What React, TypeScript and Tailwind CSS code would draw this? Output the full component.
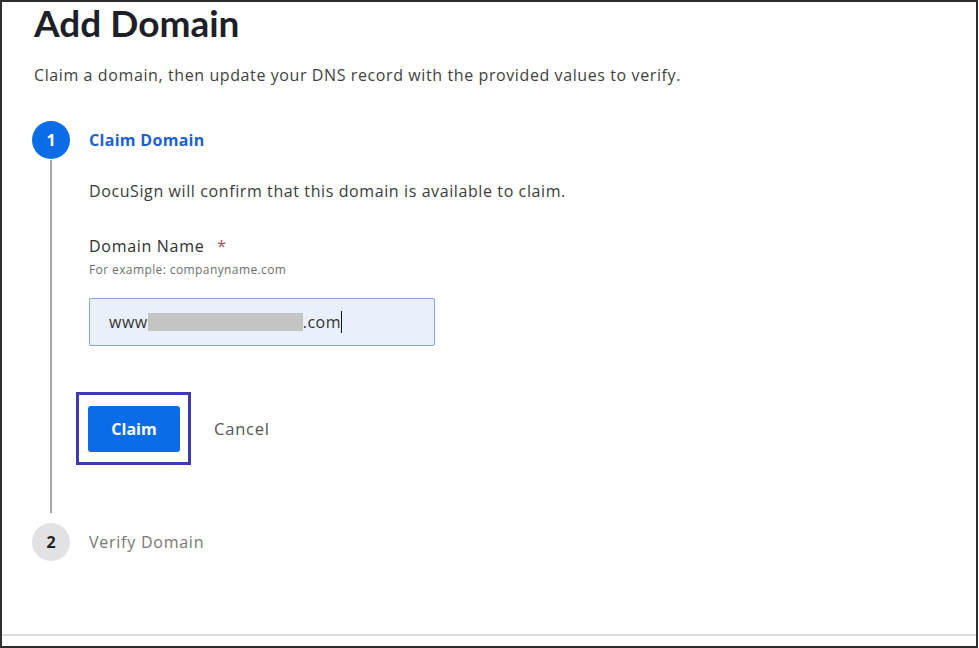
export default function App() {
  return (
    <div className="w-[978px] h-[648px] border-2 border-[#2e2e2e] bg-white font-['Open_Sans','Liberation_Sans',sans-serif]">
      <div className="h-[634px] border-b-2 border-[#dcdcdc] pl-[30px]">
        <h1 className="ml-[2px] font-['Lato','Liberation_Sans',sans-serif] text-[37px] leading-[41px] font-bold text-[#1f1f29]">
          Add Domain
        </h1>
        <p className="ml-[2px] mt-[20px] text-[16px] leading-[24px] tracking-[0.6px] text-[#3f3f3f]">
          Claim a domain, then update your DNS record with the provided values to verify.
        </p>

        {/* Step 1 */}
        <div className="mt-[34px] flex">
          <div className="w-[38px] flex flex-col items-center">
            <div className="w-[38px] h-[38px] rounded-full bg-[#0b6ce8] text-white font-bold text-[16px] flex items-center justify-center">
              1
            </div>
            <div className="w-[2px] flex-1 bg-[#a8a8a8] mt-[1px] mb-[10px]" />
          </div>
          <div className="pl-[19px] pb-[58px]">
            <div className="h-[38px] leading-[38px] text-[16px] tracking-[0.3px] font-bold text-[#1d5fcf]">Claim Domain</div>
            <p className="mt-[20px] text-[16px] leading-[24px] tracking-[0.6px] text-[#3b3b3b]">
              DocuSign will confirm that this domain is available to claim.
            </p>
            <div className="mt-[31px] text-[16px] leading-[24px] tracking-[0.7px] text-[#2f2f2f]">
              Domain Name <span className="ml-[8px] text-[#c23a5c]">*</span>
            </div>
            <div className="mt-[4px] text-[12px] leading-[16px] tracking-[0.4px] text-[#6e6e6e]">For example: companyname.com</div>
            <div className="mt-[20px] w-[346px] h-[48px] bg-[#e9f0fc] border border-[#86a6d9] rounded-[2px] pl-[19px] flex items-center text-[16px] tracking-[0.5px] text-[#333]">
              <span>www</span>
              <span className="w-[155px] h-[18px] bg-[#c4c4c4]" />
              <span>.com</span>
              <span className="w-[1px] h-[22px] bg-[#111]" />
            </div>
            <div className="mt-[46px] flex items-center">
              <div className="-ml-[13px] border-[3px] border-[#3c3cb0] pt-[11px] pb-[10px] pl-[9px] pr-[8px]">
                <button className="w-[92px] h-[46px] rounded-[3px] bg-[#0b6ce8] text-white font-bold text-[16px]">
                  Claim
                </button>
              </div>
              <span className="ml-[23px] mt-[2px] text-[16.5px] tracking-[0.8px] text-[#555]">Cancel</span>
            </div>
          </div>
        </div>

        {/* Step 2 */}
        <div className="flex items-center">
          <div className="w-[38px] h-[38px] rounded-full bg-[#e2e2e4] text-[#222] font-bold text-[16px] flex items-center justify-center">
            2
          </div>
          <span className="pl-[19px] text-[16px] tracking-[0.75px] text-[#777]">Verify Domain</span>
        </div>
      </div>
    </div>
  );
}
